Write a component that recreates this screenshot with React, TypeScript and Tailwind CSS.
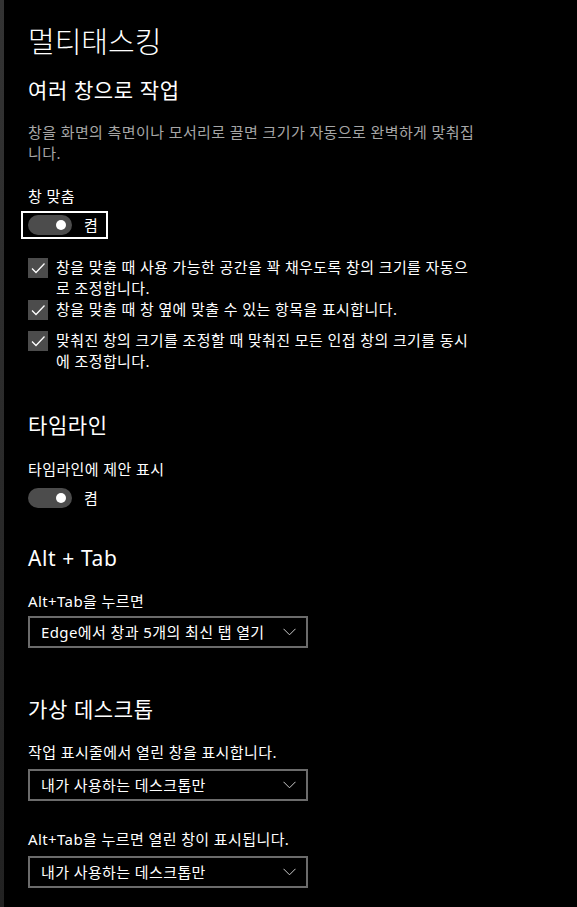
import React from "react";

const font = { fontFamily: '"Noto Sans", "Noto Sans CJK KR", sans-serif' };

function Toggle({ focused }: { focused?: boolean }) {
  return (
    <div
      className={
        "inline-flex items-center gap-[12px] h-[28px] pl-[5px] pr-[8px] " +
        (focused ? "border-2 border-white" : "border-2 border-transparent")
      }
    >
      <div className="relative w-[44px] h-[20px] rounded-full bg-[#4c4c4c]">
        <div className="absolute right-[6px] top-[5px] w-[10px] h-[10px] rounded-full bg-white" />
      </div>
      <span className="text-[15px] leading-[20px] tracking-[0.4px] text-white">켬</span>
    </div>
  );
}

function Check({ children }: { children: React.ReactNode }) {
  return (
    <div className="flex items-start gap-[8px]">
      <div className="mt-[1px] w-[20px] h-[20px] shrink-0 bg-[#4c4c4c] flex items-center justify-center">
        <svg width="16" height="16" viewBox="0 0 16 16" fill="none">
          <path d="M2 8.5 L6 12.5 L14.5 3.5" stroke="white" strokeWidth="1.3" />
        </svg>
      </div>
      <div className="text-[15px] leading-[21px] tracking-[0.4px] text-white w-[425px]">{children}</div>
    </div>
  );
}

function Select({ value }: { value: string }) {
  return (
    <div className="w-[280px] h-[32px] border-2 border-[#6b6b6b] flex items-center justify-between pl-[11px] pr-[10px]">
      <span className="text-[15px] text-white leading-[20px] tracking-[0.4px]">{value}</span>
      <svg width="13" height="8" viewBox="0 0 13 8" fill="none">
        <path d="M0.5 0.8 L6.5 6.8 L12.5 0.8" stroke="#cccccc" strokeWidth="1" />
      </svg>
    </div>
  );
}

export default function App() {
  return (
    <div className="w-[577px] h-[907px] bg-black flex overflow-hidden" style={font}>
      <div className="w-[4px] h-full bg-gradient-to-b from-[#333333] to-[#222222]" />
      <div className="flex-1 pl-[24px] flex flex-col">
        <h1 className="mt-[22px] text-[29px] leading-[40px] text-white font-light">멀티태스킹</h1>
        <h2 className="mt-[13px] text-[21px] leading-[30px] tracking-[0.6px] text-white">여러 창으로 작업</h2>
        <p className="mt-[17px] text-[15px] leading-[21px] tracking-[0.4px] text-[#a6a6a6] w-[455px]">
          창을 화면의 측면이나 모서리로 끌면 크기가 자동으로 완벽하게 맞춰집니다.
        </p>
        <div className="mt-[22px] text-[15px] leading-[20px] tracking-[0.4px] text-white">창 맞춤</div>
        <div className="mt-[5px] -ml-[7px]">
          <Toggle focused />
        </div>
        <div className="mt-[16px] flex flex-col">
          <Check>창을 맞출 때 사용 가능한 공간을 꽉 채우도록 창의 크기를 자동으로 조정합니다.</Check>
          <Check>창을 맞출 때 창 옆에 맞출 수 있는 항목을 표시합니다.</Check>
          <div className="h-[10px]" />
          <Check>맞춰진 창의 크기를 조정할 때 맞춰진 모든 인접 창의 크기를 동시에 조정합니다.</Check>
        </div>
        <h2 className="mt-[38px] text-[21px] leading-[30px] tracking-[0.6px] text-white">타임라인</h2>
        <div className="mt-[19px] text-[15px] leading-[20px] tracking-[0.4px] text-white">타임라인에 제안 표시</div>
        <div className="mt-[5px] -ml-[7px]">
          <Toggle />
        </div>
        <h2 className="mt-[29px] text-[21px] leading-[30px] tracking-[0.6px] text-white">Alt + Tab</h2>
        <div className="mt-[18px] text-[15px] leading-[20px] tracking-[0.4px] text-white">Alt+Tab을 누르면</div>
        <div className="mt-[5px]">
          <Select value="Edge에서 창과 5개의 최신 탭 열기" />
        </div>
        <h2 className="mt-[46px] text-[21px] leading-[30px] tracking-[0.6px] text-white">가상 데스크톱</h2>
        <div className="mt-[18px] text-[15px] leading-[20px] tracking-[0.4px] text-white">작업 표시줄에서 열린 창을 표시합니다.</div>
        <div className="mt-[7px]">
          <Select value="내가 사용하는 데스크톱만" />
        </div>
        <div className="mt-[28px] text-[15px] leading-[20px] tracking-[0.4px] text-white">Alt+Tab을 누르면 열린 창이 표시됩니다.</div>
        <div className="mt-[7px]">
          <Select value="내가 사용하는 데스크톱만" />
        </div>
      </div>
    </div>
  );
}
